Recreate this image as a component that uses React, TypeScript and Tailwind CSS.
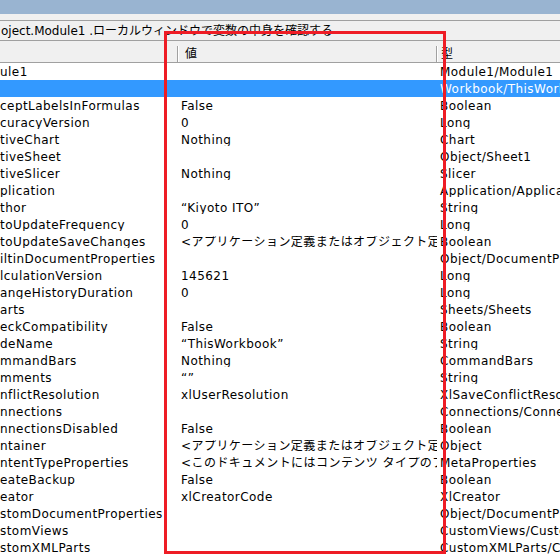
import React from "react";

type Row = { n: string; v: string; t: string; sel?: boolean };

const rows: Row[] = [
  { n: "ule1", v: "", t: "Module1/Module1" },
  { n: "", v: "", t: "Workbook/ThisWorkbook", sel: true },
  { n: "ceptLabelsInFormulas", v: "False", t: "Boolean" },
  { n: "curacyVersion", v: "0", t: "Long" },
  { n: "tiveChart", v: "Nothing", t: "Chart" },
  { n: "tiveSheet", v: "", t: "Object/Sheet1" },
  { n: "tiveSlicer", v: "Nothing", t: "Slicer" },
  { n: "plication", v: "", t: "Application/Application" },
  { n: "thor", v: "\u201CKiyoto ITO\u201D", t: "String" },
  { n: "toUpdateFrequency", v: "0", t: "Long" },
  { n: "toUpdateSaveChanges", v: "<アプリケーション定義またはオブジェクト定義のエラーです。>", t: "Boolean" },
  { n: "iltinDocumentProperties", v: "", t: "Object/DocumentProperties" },
  { n: "lculationVersion", v: "145621", t: "Long" },
  { n: "angeHistoryDuration", v: "0", t: "Long" },
  { n: "arts", v: "", t: "Sheets/Sheets" },
  { n: "eckCompatibility", v: "False", t: "Boolean" },
  { n: "deName", v: "\u201CThisWorkbook\u201D", t: "String" },
  { n: "mmandBars", v: "Nothing", t: "CommandBars" },
  { n: "mments", v: "\u201C\u201D", t: "String" },
  { n: "nflictResolution", v: "xlUserResolution", t: "XlSaveConflictResolution" },
  { n: "nnections", v: "", t: "Connections/Connections" },
  { n: "nnectionsDisabled", v: "False", t: "Boolean" },
  { n: "ntainer", v: "<アプリケーション定義またはオブジェクト定義のエラーです。>", t: "Object" },
  { n: "ntentTypeProperties", v: "<このドキュメントにはコンテンツ タイプのプロパティがありません。>", t: "MetaProperties" },
  { n: "eateBackup", v: "False", t: "Boolean" },
  { n: "eator", v: "xlCreatorCode", t: "XlCreator" },
  { n: "stomDocumentProperties", v: "", t: "Object/DocumentProperties" },
  { n: "stomViews", v: "", t: "CustomViews/CustomViews" },
  { n: "stomXMLParts", v: "", t: "CustomXMLParts/CustomXMLParts" },
];

export default function App() {
  return (
    <div
      className="relative w-[560px] h-[560px] overflow-hidden bg-white text-black text-[12px]"
      style={{ fontFamily: '"DejaVu Sans", "Noto Sans CJK JP", sans-serif' }}
    >
      <div className="h-[14px] bg-[#99b4d1]" />
      <div className="h-[32px] bg-[#f0f0f0] pt-[6px]">
        <div className="h-[21px] border-t border-b border-[#a0a0a0] bg-[#f0f0f0] flex items-center whitespace-nowrap overflow-hidden leading-none">
          <span className="pl-[1px]">oject.Module1 .ローカルウィンドウで変数の中身を確認する</span>
        </div>
      </div>
      <div className="h-[17px] flex bg-[#f0f0f0] border-b border-[#a0a0a0] leading-none">
        <div className="w-[178px] h-full border-r border-[#a0a0a0]" />
        <div className="w-[259px] h-full border-l border-white border-r border-r-[#a0a0a0] flex items-center pl-[6px]">値</div>
        <div className="flex-1 h-full border-l border-white flex items-center pl-[3px]">型</div>
      </div>
      <div className="flex flex-col tracking-[0.45px]">
        {rows.map((r, i) => (
          <div
            key={i}
            className={
              "h-[17px] flex items-center whitespace-nowrap leading-none " +
              (r.sel ? "bg-[#3399ff] text-white" : "")
            }
          >
            <div className="w-[181px] shrink-0 overflow-hidden">{r.n}</div>
            <div className="w-[256px] shrink-0 overflow-hidden">{r.v}</div>
            <div className="flex-1 overflow-hidden pl-[3px]">{r.t}</div>
          </div>
        ))}
      </div>
      <div className="absolute left-[164px] top-[31px] w-[282px] h-[523px] border-[3px] border-[#ee1c25]" />
    </div>
  );
}
